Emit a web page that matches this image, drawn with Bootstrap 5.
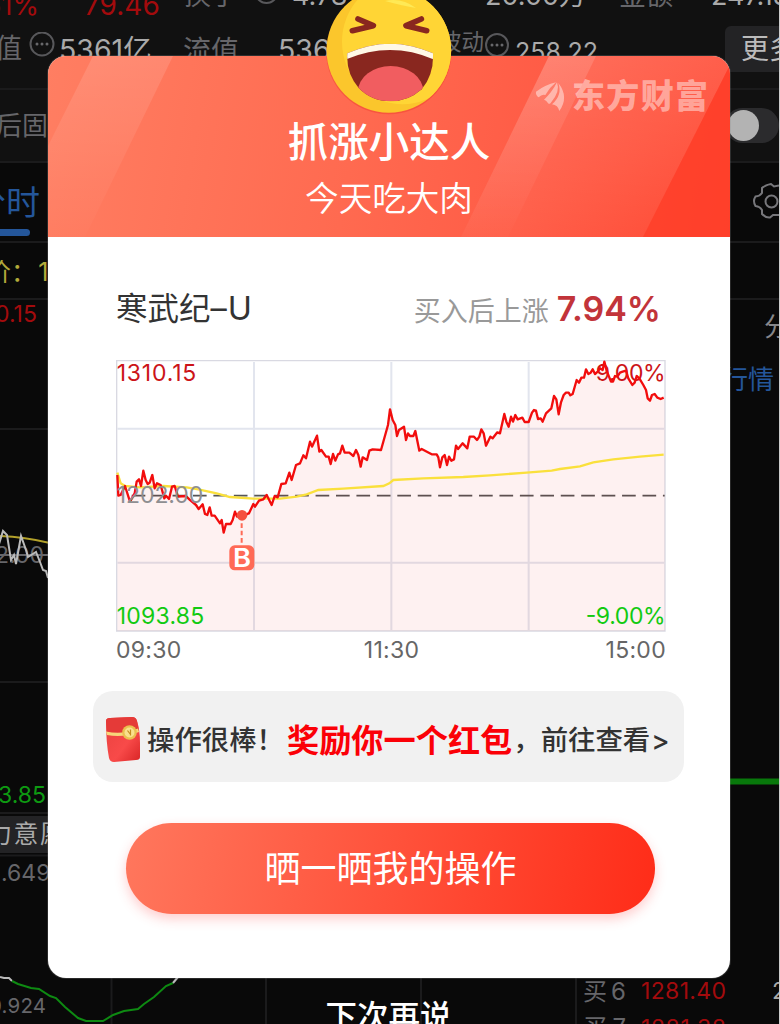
<!DOCTYPE html>
<html lang="zh-CN">
<head>
<meta charset="utf-8">
<meta name="viewport" content="width=device-width, initial-scale=1">
<title>抓涨小达人</title>
<link href="https://cdn.jsdelivr.net/npm/bootstrap@5.3.0/dist/css/bootstrap.min.css" rel="stylesheet">
<style>
:root{--up:#a30b0d;--dim:#66666a;--pale:#aaa;--blue:#24569a;--rule:#1b1b1c}
body{width:780px;height:1024px;overflow:hidden;background:#090909;font-family:Inter,"Noto Sans CJK SC",sans-serif;font-size:27px;line-height:1}
svg{display:block}
.quote-page{height:1024px;border-right:1px solid #ccc;white-space:nowrap;color:var(--dim)}
.quote-page .line-b{border-bottom:2px solid var(--rule)}
.quote-top{background:#111}
.c-up{color:var(--up)}.c-pale{color:var(--pale)}.c-blue{color:var(--blue)}.c-yel{color:#b3a93a}
.cells{display:grid;align-items:center}
.cells>*{min-width:0}
.stat-a{grid-template:23px / 60px 100px 132px 180px 147px 92px 1fr;align-items:end}
.stat-a>*{padding-bottom:14px}
.stat-a>.c-up{padding-bottom:4px}
.stat-b{grid-template-columns:59px 124px 95px 184px 53px 210px 1fr;height:67px;padding-bottom:14px}
.more-btn{background:#232325;color:#bbb;border-radius:6px 0 0 6px;height:46px;font-size:28px;padding-left:16px}
.switch-box{width:54px;height:35px;border-radius:18px;background:#2b2b2d}
.knob{width:31px;height:31px;border-radius:50%;background:#b3b3b3}
.tab-mark{width:58px;height:7px;background:var(--blue);border-radius:4px;margin-top:9px}
.intent{background:#232325;color:#aaa;height:37px;width:50px;font-size:25px;letter-spacing:1.500px}
.promo{left:48px;top:56px;width:682px;height:922px;border-radius:18px;border:0;box-shadow:0 0 0 1px rgba(140,140,140,.25);background:#fff}
.promo-head{height:181px;border-radius:18px 18px 0 0;overflow:hidden;background:linear-gradient(100deg,#ff7e62 0%,#ff6a50 45%,#ff5c46 70%,#ff452f 100%);color:#fff}
.promo-title{font-size:40.5px;font-weight:500;margin-top:67px}
.promo-sub{font-size:33.6px;margin-top:18px;font-weight:350}
.emoji{left:268px;top:-56px}
.brand{left:482px;top:19px}
.shine{left:0;top:0}
.stock{height:123px;padding:21px 69px 0 68px}
.stock-name{font-size:31.5px;color:#333}
.gain-label{font-size:27px;color:#999}
.gain{font-size:34px;font-weight:600;color:#c2343a}
.trend{margin-left:68px}
.axis{font-size:23px;color:#666;width:550px;margin-left:68px;height:36px;letter-spacing:.3px}
.reward{margin:23px 0 0 45px;width:591px;height:91px;border-radius:20px;background:#f1f1f1;color:#333;font-weight:500;font-size:27.4px;padding-left:12px;white-space:nowrap}
.reward span,.reward b{padding-top:9px}
.reward b{color:#fb0007;font-size:32.2px;font-weight:700}
.share{margin:41px 0 0 78px;width:529px;height:91px;border-radius:46px;border:0;color:#fff;font-size:36px;line-height:1;background:linear-gradient(100deg,#ff775d,#ff523b 50%,#ff2c18);box-shadow:0 5px 12px rgba(255,60,60,.25);font-family:inherit}
.later{top:1001px;left:0;width:777px;font-size:31.5px;font-weight:500;color:#fff}
</style>
</head>
<body class="position-relative">

<div class="quote-page overflow-hidden">
  <div class="quote-top">
    <div class="cells stat-a">
      <span class="c-up" style="margin-left:-15px">51%</span><span class="c-up ps-4" style="font-size:28px">79.46</span>
      <span class="ps-4 d-flex align-items-center">换手<svg class="ms-3" width="25" height="25" viewBox="0 0 25 25"><circle cx="12.500" cy="9" r="11" fill="none" stroke="#58585b" stroke-width="2"/></svg></span>
      <span class="c-pale">4.78%</span><span class="c-pale" style="padding-left:13px">20.00万</span>
      <span>金额</span><span class="c-pale">247.18</span>
    </div>
    <div class="cells stat-b line-b">
      <span class="d-flex align-items-center" style="margin-left:-5px;gap:7px">值<svg width="26" height="34" viewBox="0 0 26 34" fill="#68686b"><circle cx="13" cy="12" r="11.500" fill="none" stroke="#58585b" stroke-width="2"/><circle cx="8" cy="12" r="1.500"/><circle cx="13" cy="12" r="1.500"/><circle cx="18" cy="12" r="1.500"/></svg></span>
      <span class="c-pale pt-1" style="font-size:28.500px">5361亿</span><span class="pt-1" style="font-size:28px">流值</span><span class="c-pale pt-1" style="font-size:28.500px">5361亿</span>
      <span class="d-flex align-items-center" style="font-size:22.500px;margin-left:-23px;padding-bottom:12px">波动<svg width="26" height="26" viewBox="0 0 26 26" fill="#68686b" class="flex-shrink-0"><circle cx="13" cy="15" r="11" fill="none" stroke="#58585b" stroke-width="2"/><circle cx="8" cy="15" r="1.500"/><circle cx="13" cy="15" r="1.500"/><circle cx="18" cy="15" r="1.500"/></svg></span>
      <span class="c-pale" style="font-size:25px;padding-top:8px">258.22</span>
      <span class="more-btn d-flex align-items-center">更多</span>
    </div>
    <div class="d-flex justify-content-between align-items-center line-b" style="height:73px">
      <span style="margin-left:-4px;font-size:26px">后固</span>
      <div class="switch-box d-flex align-items-center"><div class="knob" style="margin-left:3px"></div></div>
    </div>
  </div>
  <div class="d-flex justify-content-between line-b" style="height:80px">
    <div class="c-blue" style="margin-left:-28px;padding-top:23px;font-size:34px">分时<div class="tab-mark"></div></div>
    <svg width="28" height="38" viewBox="0 0 28 38" style="margin-top:19px" fill="none" stroke="#77777b" stroke-width="2"><path d="M28 3.500 23 4.500 20 2Q14 3 11 6L11 11Q9 14 4.500 14.500Q1.500 19 4.500 24Q9 24.500 11 28L11 32Q15 36 19 35.500L22 33 28 33"/><circle cx="20.500" cy="19.500" r="6"/></svg>
  </div>
  <div class="line-b d-flex align-items-center c-yel" style="height:57px;font-size:25px"><span class="pt-1" style="margin-left:-14px">价：&#8202;1202</span></div>
  <div class="d-flex justify-content-between" style="height:512px">
    <svg width="50" height="512" viewBox="0 300 50 512">
      <path d="M0 429H50M0 682H50" stroke="#1b1b1c" stroke-width="2"/>
      <text x="-5" y="322" font-size="23" fill="#a30b0d">0.15</text>
      <path d="M0 536Q25 537 50 543" stroke="#b3a12a" stroke-width="2" fill="none"/>
      <path d="M0 555H50" stroke="#66666a" stroke-width="2"/>
      <text x="-5" y="563" font-size="23" fill="#66666a">2.00</text>
      <path d="M-1 544 3 531 7 535 11 560 14 555 16 564 21 536 26 550 28 557 36 552 40 562 43 570 46 571 48 578" stroke="#bbb" stroke-width="2" fill="none"/>
      <text x="-2" y="803" font-size="23" fill="#0e9a12">3.85</text>
    </svg>
    <svg width="50" height="512" viewBox="729 300 50 512">
      <text x="764" y="336" font-size="26" fill="#87878a">分</text>
      <text x="722" y="389" font-size="26" fill="#24569a" textLength="52">行情</text>
      <path d="M729 781.500H779" stroke="#08780b" stroke-width="6"/>
    </svg>
  </div>
  <div style="height:4px;border-top:2px solid #1b1b1c;width:50px"></div>
  <div class="intent d-flex align-items-center"><span style="margin-left:-13px">力意愿</span></div>
  <div class="overflow-hidden" style="height:171px">
    <svg width="779" height="171" viewBox="0 853 779 171">
      <path d="M0 855.500H50M111.500 978V1024M266 978V1024M421 978V1024M576 978V1024" stroke="#1b1b1c" stroke-width="2"/>
      <text x="1" y="881" font-size="23" fill="#66666a">.649</text>
      <text x="-11" y="1013" font-size="20.500" fill="#66666a" textLength="57">0.924</text>
      <path d="M0 977 4 978 9 978 12 981" stroke="#bbb" stroke-width="2" fill="none"/>
      <path d="M12 981 18 984 31 988 39 989 50 996 56 998 65 1007 78 1018 86 1021 103 1021 113 1015 124 1011 138 1009 144 1004 154 997 166 986 173 983" stroke="#0e8a12" stroke-width="2" fill="none"/>
      <path d="M173 983 178 977" stroke="#bbb" stroke-width="2"/>
      <text x="583" y="1000" font-size="24" fill="#66666a" textLength="43">买 6</text>
      <text x="583" y="1036" font-size="24" fill="#66666a" textLength="43">买 7</text>
      <text x="641" y="999" font-size="23" fill="#a30b0d" textLength="85">1281.40</text>
      <text x="641" y="1036" font-size="23" fill="#a30b0d" textLength="85">1281.38</text>
      <text x="772" y="999" font-size="23" fill="#aaa">2</text>
    </svg>
  </div>
</div>

<div class="card promo position-absolute">
  <div class="promo-head position-relative d-flex flex-column align-items-center">
    <svg class="shine position-absolute" width="682" height="181" viewBox="0 0 682 181">
      <defs>
        <linearGradient id="s1" x1="0" y1="0" x2="0" y2="1"><stop offset="0" stop-color="#fff" stop-opacity=".13"/><stop offset="1" stop-color="#fff" stop-opacity=".01"/></linearGradient>
        <linearGradient id="s2" x1="0" y1="0" x2="0" y2="1"><stop offset="0" stop-color="#fff" stop-opacity=".12"/><stop offset="1" stop-color="#fff" stop-opacity=".02"/></linearGradient>
      </defs>
      <path d="M45 0H125L37 181H0V90Z" fill="url(#s1)"/>
      <path d="M501 0H548L460 181H413Z" fill="url(#s1)"/>
      <path d="M501 0H682V9L595 181H413Z" fill="url(#s2)"/>
      <path d="M682 9V181H595Z" fill="#ff3d28" fill-opacity=".7"/>
    </svg>
    <svg class="brand position-absolute" width="180" height="40" viewBox="530 75 180 40" fill="#fff" fill-opacity=".45">
      <g transform="translate(530 75) scale(.3333)">
        <path d="M18 50Q45 30 78 22Q58 38 46 60Q36 56 26 67Q16 60 18 50Z"/>
        <path d="M42 74Q66 52 81 22Q92 50 62 84Q56 90 52 82Q49 76 42 74Z"/>
        <path d="M85 24Q118 66 88 108Q84 90 66 88Q98 60 85 24Z"/>
      </g>
      <text x="572" y="108" font-size="33" font-weight="900" textLength="136">东方财富</text>
    </svg>
    <div class="promo-title position-relative">抓涨小达人</div>
    <div class="promo-sub position-relative">今天吃大肉</div>
  </div>

  <svg class="emoji position-absolute" width="146" height="124" viewBox="-12 0 438 372">
    <defs>
      <clipPath id="mouth"><path d="M82 160Q210 102 339 160Q342 225 305 268Q265 304 212 304Q155 304 116 264Q78 220 82 160Z"/></clipPath>
      <clipPath id="disc"><circle cx="206.500" cy="151" r="187"/></clipPath>
    </defs>
    <circle cx="206.500" cy="155" r="188" fill="#e9281d" fill-opacity=".3"/>
    <circle cx="206.500" cy="151" r="187" fill="#fbc62c"/>
    <ellipse cx="248" cy="125" rx="182" ry="188" fill="#ffd535" clip-path="url(#disc)"/>
    <path d="M195 3Q245-8 288 24Q250 18 195 3Z" fill="#ffe955"/>
    <g clip-path="url(#mouth)">
      <path d="M70 100H350V320H70Z" fill="#89271f"/>
      <ellipse cx="212" cy="274" rx="98" ry="76" fill="#f15d60"/>
      <path d="M70 90H350V182Q210 118 70 182Z" fill="#fff8e6"/>
    </g>
    <path d="M114 57 160 77 97 92M304 57 258 77 320 92" fill="none" stroke="#89271f" stroke-width="17" stroke-linecap="round" stroke-linejoin="round"/>
  </svg>

  <div class="stock d-flex align-items-center justify-content-between">
    <span class="stock-name">寒武纪<span style="letter-spacing:1px;font-size:32.500px">–U</span></span>
    <span class="d-flex align-items-center gap-2"><span class="gain-label pt-1">买入后上涨</span><span class="gain">7.94%</span></span>
  </div>

  <svg class="trend" width="550" height="272" viewBox="18 30 1650 816">
    <path d="M20 32H1665V843H20Z" fill="#fff" stroke="#d9d9e2" stroke-width="4"/>
    <path d="M22 236H1664M22 638H1664M432 36V840M844 36V840M1256 36V840" stroke="#e2e5ee" stroke-width="6" fill="none"/>
    <path d="M65 437H1664" stroke="#555" stroke-width="5" stroke-dasharray="41 20.300"/>
    <path fill="#f00000" fill-opacity=".055" d="M22 375 25 437 32 435 45 408 60 455 74 430 80 395 87 388 93 408 100 362 107 390 113 402 119 398 127 375 134 415 141 400 152 405 163 445 168 437 177 447 186 410 194 408 204 440 228 438 238 448 258 465 266 477 278 463 285 492 292 495 299 472 305 497 314 497 330 520 335 510 341 548 348 522 362 522 368 510 375 485 381 500 395 497 417 490 430 462 435 470 447 452 460 448 470 435 485 465 494 438 503 442 514 402 527 400 538 368 545 390 558 345 570 340 580 316 588 325 600 275 606 290 621 257 628 305 634 300 648 320 656 320 662 342 669 312 676 332 684 313 690 310 697 287 704 308 718 308 730 318 738 300 745 315 752 350 758 322 771 330 778 302 788 298 813 300 834 225 840 178 848 210 856 225 861 258 867 240 882 230 888 270 894 250 900 258 910 258 916 243 928 302 935 297 965 313 980 313 985 322 990 352 997 322 1004 315 1011 345 1017 320 1024 332 1032 328 1038 287 1044 297 1058 280 1072 295 1079 260 1092 260 1101 270 1108 260 1114 238 1121 250 1128 287 1141 260 1148 265 1162 247 1170 250 1183 192 1189 215 1196 230 1203 200 1209 215 1216 195 1223 208 1237 203 1244 216 1256 216 1266 188 1272 180 1278 182 1284 207 1292 205 1298 215 1308 190 1324 175 1332 138 1339 148 1346 193 1353 157 1361 135 1368 128 1376 128 1381 136 1388 132 1400 90 1407 98 1414 83 1422 83 1428 58 1435 72 1442 68 1448 58 1455 72 1463 65 1470 55 1478 60 1483 35 1490 62 1497 80 1503 95 1509 95 1515 78 1522 80 1530 68 1538 65 1548 62 1555 85 1567 105 1574 98 1580 78 1588 85 1600 105 1608 120 1613 145 1620 152 1626 135 1634 132 1642 143 1652 147 1664 143V842H22Z"/>
    <text x="20" y="94" font-size="69" fill="#cc1418" textLength="239">1310.15</text>
    <text x="1457" y="94" font-size="69" fill="#cc1418" textLength="210">9.00%</text>
    <path fill="none" stroke="#fae03c" stroke-width="7" d="M22 368 32 400 45 408 90 412 160 408 230 412 265 418 320 430 360 441 430 446 510 446 560 440 590 433 625 420 700 416 820 408 838 400 850 390 940 385 1060 381 1140 376 1250 368 1325 362 1350 357 1410 349 1450 337 1510 328 1590 320 1661 314"/>
    <path fill="none" stroke="#f20d0d" stroke-width="7" stroke-linejoin="round" d="M22 375 25 437 32 435 45 408 60 455 74 430 80 395 87 388 93 408 100 362 107 390 113 402 119 398 127 375 134 415 141 400 152 405 163 445 168 437 177 447 186 410 194 408 204 440 228 438 238 448 258 465 266 477 278 463 285 492 292 495 299 472 305 497 314 497 330 520 335 510 341 548 348 522 362 522 368 510 375 485 381 500 395 497 417 490 430 462 435 470 447 452 460 448 470 435 485 465 494 438 503 442 514 402 527 400 538 368 545 390 558 345 570 340 580 316 588 325 600 275 606 290 621 257 628 305 634 300 648 320 656 320 662 342 669 312 676 332 684 313 690 310 697 287 704 308 718 308 730 318 738 300 745 315 752 350 758 322 771 330 778 302 788 298 813 300 834 225 840 178 848 210 856 225 861 258 867 240 882 230 888 270 894 250 900 258 910 258 916 243 928 302 935 297 965 313 980 313 985 322 990 352 997 322 1004 315 1011 345 1017 320 1024 332 1032 328 1038 287 1044 297 1058 280 1072 295 1079 260 1092 260 1101 270 1108 260 1114 238 1121 250 1128 287 1141 260 1148 265 1162 247 1170 250 1183 192 1189 215 1196 230 1203 200 1209 215 1216 195 1223 208 1237 203 1244 216 1256 216 1266 188 1272 180 1278 182 1284 207 1292 205 1298 215 1308 190 1324 175 1332 138 1339 148 1346 193 1353 157 1361 135 1368 128 1376 128 1381 136 1388 132 1400 90 1407 98 1414 83 1422 83 1428 58 1435 72 1442 68 1448 58 1455 72 1463 65 1470 55 1478 60 1483 35 1490 62 1497 80 1503 95 1509 95 1515 78 1522 80 1530 68 1538 65 1548 62 1555 85 1567 105 1574 98 1580 78 1588 85 1600 105 1608 120 1613 145 1620 152 1626 135 1634 132 1642 143 1652 147 1661 143"/>
    <text x="20" y="458" font-size="69" fill="#8e8e91" textLength="260">1202.00</text>
    <text x="20" y="822" font-size="69" fill="#12ca12" textLength="263">1093.85</text>
    <text x="1427" y="822" font-size="69" fill="#12ca12" textLength="240">-9.00%</text>
    <circle cx="396" cy="496" r="16" fill="#f5503f"/>
    <path d="M395 520V582" stroke="#ff6a56" stroke-width="6" stroke-dasharray="14 8"/>
    <rect x="358" y="586" width="75" height="75" rx="16" fill="#ff6a56"/>
    <text x="396" y="650" font-size="76" font-weight="600" fill="#fff" text-anchor="middle" textLength="54" lengthAdjust="spacingAndGlyphs">B</text>
  </svg>
  <div class="axis d-flex justify-content-between align-items-center"><span>09:30</span><span class="pe-1">11:30</span><span>15:00</span></div>

  <div class="reward d-flex align-items-center">
    <svg width="36" height="48" viewBox="0 0 36 48" class="flex-shrink-0 mt-1">
      <defs><linearGradient id="env" x1="0" y1="0" x2="1" y2="1"><stop offset="0" stop-color="#e9413f"/><stop offset=".6" stop-color="#f84a49"/><stop offset="1" stop-color="#d92526"/></linearGradient></defs>
      <path d="M1 6Q1 3 5 3L27 2Q31 2 32 6Q35 15 35 28V42Q35 45 31 45L9 47Q5 47 4 43Q1 27 1 6Z" fill="url(#env)"/>
      <path d="M1 6Q1 3 5 3L27 2Q31 2 32 6L34 16Q17 21 2 17Z" fill="#e53a38"/>
      <path d="M1 16.500Q18 20 33 13.500L34 17Q18 23 2 20Z" fill="#f7d67a"/>
      <circle cx="24.500" cy="17.500" r="7.300" fill="#eac04f"/><circle cx="24.500" cy="17.500" r="5" fill="#f9e08d"/>
      <path d="M22.500 15.500 25.500 19.500M25.500 14.500V20.500" stroke="#c58d22" stroke-width="1.200"/>
    </svg>
    <span style="padding-left:6px;margin-right:3px">操作很棒！</span><b>奖励你一个红包</b><span style="margin-left:1px">，前往查看<span class="p-0" style="margin-left:1px">&gt;</span></span>
  </div>
  <button type="button" class="btn share">晒一晒我的操作</button>
</div>

<div class="later position-absolute text-center">下次再说</div>
<script src="https://cdn.jsdelivr.net/npm/bootstrap@5.3.0/dist/js/bootstrap.bundle.min.js"></script>
</body>
</html>
